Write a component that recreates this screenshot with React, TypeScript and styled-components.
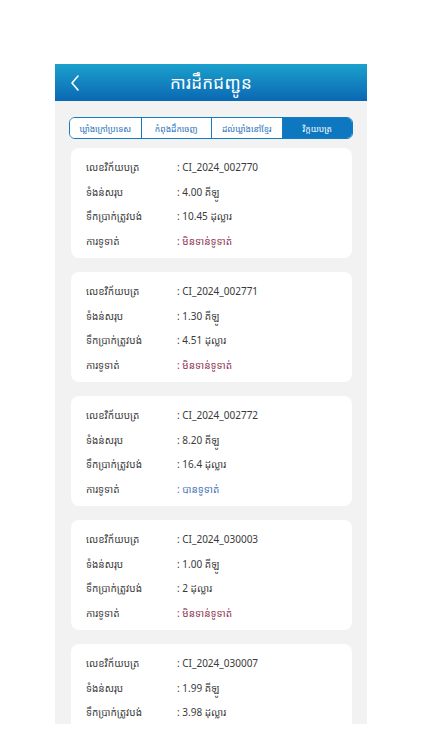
import React, { FC } from 'react';
import styled, { createGlobalStyle } from 'styled-components';

const GlobalStyle = createGlobalStyle`
  html, body {
    margin: 0;
    padding: 0;
    background: #fff;
  }
  body {
    font-family: "Noto Sans Khmer", "Noto Sans", "Liberation Sans", sans-serif;
  }
`;

type Status = 'unpaid' | 'paid';

interface Invoice {
  id: string;
  weight: string;
  amount: string;
  status: Status;
}

const invoices: Invoice[] = [
  { id: 'CI_2024_002770', weight: '4.00', amount: '10.45', status: 'unpaid' },
  { id: 'CI_2024_002771', weight: '1.30', amount: '4.51', status: 'unpaid' },
  { id: 'CI_2024_002772', weight: '8.20', amount: '16.4', status: 'paid' },
  { id: 'CI_2024_030003', weight: '1.00', amount: '2', status: 'unpaid' },
  { id: 'CI_2024_030007', weight: '1.99', amount: '3.98', status: 'unpaid' },
];

const tabs = ['ឃ្លាំងក្រៅប្រទេស', 'កំពុងដឹកចេញ', 'ដល់ឃ្លាំងនៅខ្មែរ', 'វិក្កយបត្រ'];

const Screen = styled.div`
  width: 312px;
  height: 660px;
  margin: 64px auto 0;
  background: #f2f2f2;
  overflow: hidden;
  display: flex;
  flex-direction: column;
`;

const Header = styled.div`
  height: 37px;
  flex-shrink: 0;
  background: linear-gradient(180deg, #1ba0cc 0%, #0b68b4 100%);
  display: flex;
  align-items: center;
  justify-content: center;
  position: relative;
`;

const Back = styled.div`
  position: absolute;
  left: 14px;
  top: 0;
  height: 100%;
  display: flex;
  align-items: center;
`;

const Title = styled.h1`
  margin: 0;
  color: #fff;
  font-size: 17px;
  font-weight: 400;
  letter-spacing: 0.3px;
`;

const TabBar = styled.div`
  margin: 16px 14px 0;
  height: 22px;
  display: grid;
  grid-template-columns: repeat(4, 1fr);
  border: 1px solid #1479bf;
  border-radius: 6px;
  overflow: hidden;
  background: #fff;
  flex-shrink: 0;
  box-sizing: border-box;
`;

const Tab = styled.div<{ $active?: boolean }>`
  display: flex;
  align-items: center;
  justify-content: center;
  font-size: 8.5px;
  white-space: nowrap;
  color: ${(p) => (p.$active ? '#fff' : '#1f72b5')};
  background: ${(p) => (p.$active ? '#0d78c0' : '#fff')};
  & + & {
    border-left: 1px solid #1479bf;
  }
`;

const List = styled.div`
  display: flex;
  flex-direction: column;
  gap: 14px;
  padding: 9px 15px 0 16px;
`;

const Card = styled.div`
  background: #fff;
  border-radius: 8px;
  padding: 7px 15px 5px;
  flex-shrink: 0;
`;

const Row = styled.div`
  display: flex;
  height: 24.5px;
  align-items: center;
  font-size: 10px;
  color: #3a3a3a;
`;

const Label = styled.div`
  width: 91px;
  flex-shrink: 0;
`;

const Value = styled.div<{ $status?: Status }>`
  color: ${(p) => (p.$status === 'paid' ? '#3f72b4' : p.$status === 'unpaid' ? '#8e3350' : '#3a3a3a')};
`;

const InvoiceCard: FC<{ invoice: Invoice }> = ({ invoice }) => (
  <Card>
    <Row>
      <Label>លេខវិក័យបត្រ</Label>
      <Value>: {invoice.id}</Value>
    </Row>
    <Row>
      <Label>ទំងន់សរុប</Label>
      <Value>: {invoice.weight} គីឡូ</Value>
    </Row>
    <Row>
      <Label>ទឹកប្រាក់ត្រូវបង់</Label>
      <Value>: {invoice.amount} ដុល្លារ</Value>
    </Row>
    <Row>
      <Label>ការទូទាត់</Label>
      <Value $status={invoice.status}>
        : {invoice.status === 'paid' ? 'បានទូទាត់' : 'មិនទាន់ទូទាត់'}
      </Value>
    </Row>
  </Card>
);

const App: FC = () => (
  <>
    <GlobalStyle />
    <Screen>
      <Header>
        <Back>
          <svg width="12" height="18" viewBox="0 0 12 18" fill="none">
            <path d="M9 2 L3 9 L9 16" stroke="#fff" strokeWidth="1.6" strokeLinecap="round" strokeLinejoin="round" />
          </svg>
        </Back>
        <Title>ការដឹកជញ្ជូន</Title>
      </Header>
      <TabBar>
        {tabs.map((t, i) => (
          <Tab key={t} $active={i === tabs.length - 1}>
            {t}
          </Tab>
        ))}
      </TabBar>
      <List>
        {invoices.map((inv) => (
          <InvoiceCard key={inv.id} invoice={inv} />
        ))}
      </List>
    </Screen>
  </>
);

export default App;
